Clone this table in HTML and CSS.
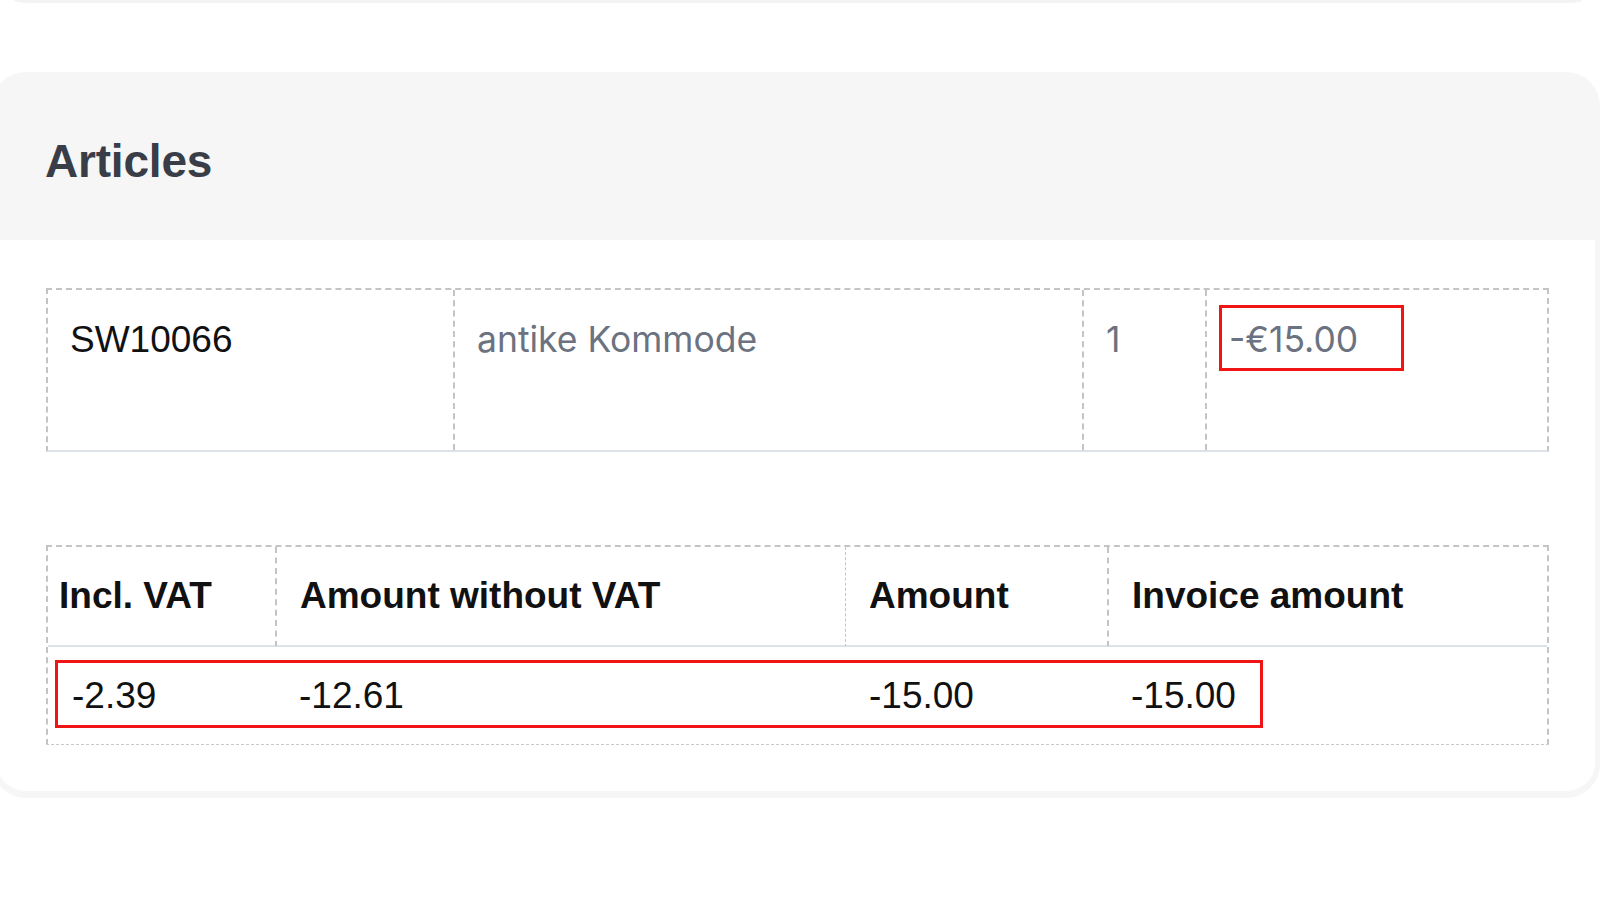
FILE: index.html
```html
<!DOCTYPE html>
<html lang="en">
<head>
<meta charset="utf-8">
<title>Articles</title>
<link rel="stylesheet" href="styles.css">
</head>
<body>
<div class="top-sliver"></div>
<section class="card">
  <header class="card-head">
    <h2>Articles</h2>
  </header>
  <div class="card-body">
    <table class="items">
      <colgroup>
        <col class="c-code"><col class="c-name"><col class="c-qty"><col class="c-price">
      </colgroup>
      <tbody>
        <tr>
          <td class="code">SW10066</td>
          <td class="muted">antike Kommode</td>
          <td class="muted">1</td>
          <td class="muted"><span class="hl">-€15.00</span></td>
        </tr>
      </tbody>
    </table>

    <div class="totals-wrap">
      <table class="totals">
        <colgroup>
          <col class="t-vat"><col class="t-net"><col class="t-amount"><col class="t-invoice">
        </colgroup>
        <thead>
          <tr>
            <th>Incl. VAT</th>
            <th>Amount without VAT</th>
            <th class="thin">Amount</th>
            <th>Invoice amount</th>
          </tr>
        </thead>
        <tbody>
          <tr>
            <td>-2.39</td>
            <td>-12.61</td>
            <td>-15.00</td>
            <td>-15.00</td>
          </tr>
        </tbody>
      </table>
      <div class="mark"></div>
    </div>
  </div>
</section>
</body>
</html>
```

FILE: styles.css
```css
html, body {
  margin: 0;
  padding: 0;
  background: #ffffff;
}

body {
  font-family: "Liberation Sans", Arial, sans-serif;
  overflow: hidden;
  width: 1600px;
  height: 900px;
}

.top-sliver {
  height: 3px;
  margin: 0 18px 0 14px;
  background: #f3f3f3;
  border-radius: 0 0 14px 14px / 0 0 3px 3px;
}

.card {
  margin: 69px 0 0 -8px;
  width: 1608px;
  box-sizing: border-box;
  background: #ffffff;
  border: 5px solid #f6f6f6;
  border-top: 0;
  border-bottom-width: 7px;
  border-radius: 34px;
  overflow: hidden;
}

.card-head {
  background: #f6f6f6;
  height: 168px;
  box-sizing: border-box;
  padding: 63px 0 0 48px;
}

.card-head h2 {
  margin: 0;
  font-size: 46px;
  line-height: 53px;
  font-weight: 700;
  color: #393d48;
  letter-spacing: -0.2px;
}

.card-body {
  padding: 48px 46px 46px 49px;
}

/* Items table */
.items {
  width: 100%;
  table-layout: fixed;
  border-collapse: separate;
  border-spacing: 0;
  border: 2px dashed #c4c4c4;
  border-bottom: 2px solid #dde1e8;
}

.c-code { width: 405px; }
.c-name { width: 629px; }
.c-qty { width: 123px; }
.c-price { width: 342px; }

.items td {
  box-sizing: border-box;
  height: 160px;
  padding: 28px 12px 0 22px;
  vertical-align: baseline;
  font-size: 37px;
  white-space: nowrap;
}

.items td + td {
  border-left: 2px dashed #c4c4c4;
}

.items .code {
  color: #111111;
}

.items .muted {
  font-family: Inter, "Liberation Sans", sans-serif;
  font-size: 35.5px;
  color: #6b7280;
}

.hl {
  position: relative;
}

.hl::after {
  content: "";
  position: absolute;
  left: -10px;
  right: -46px;
  top: -13px;
  bottom: -10px;
  border: 3px solid #f01414;
}

/* Totals table */
.totals-wrap {
  position: relative;
  margin-top: 93px;
}

.totals {
  width: 100%;
  table-layout: fixed;
  border-collapse: separate;
  border-spacing: 0;
  border: 2px dashed #c4c4c4;
  border-bottom: 1px dashed #c8c8c8;
}

.t-vat { width: 227px; }
.t-net { width: 570px; }
.t-amount { width: 262px; }
.t-invoice { width: 440px; }

.totals th {
  box-sizing: border-box;
  height: 100px;
  padding: 0 10px 0 23px;
  text-align: left;
  vertical-align: middle;
  font-size: 37px;
  font-weight: 700;
  color: #111111;
  border-bottom: 2px solid #dde1e8;
  white-space: nowrap;
}

.totals th:first-child {
  padding-left: 11px;
}

.totals th + th {
  border-left: 2px dashed #c4c4c4;
}

.totals th.thin {
  border-left: 1px dashed #c4c4c4;
}

.totals td {
  box-sizing: border-box;
  height: 97px;
  padding: 0 10px 0 24px;
  vertical-align: middle;
  font-size: 37px;
  color: #111111;
  white-space: nowrap;
}

.mark {
  position: absolute;
  left: 9px;
  top: 115px;
  width: 1208px;
  height: 68px;
  box-sizing: border-box;
  border: 3px solid #f01414;
  pointer-events: none;
}
```
